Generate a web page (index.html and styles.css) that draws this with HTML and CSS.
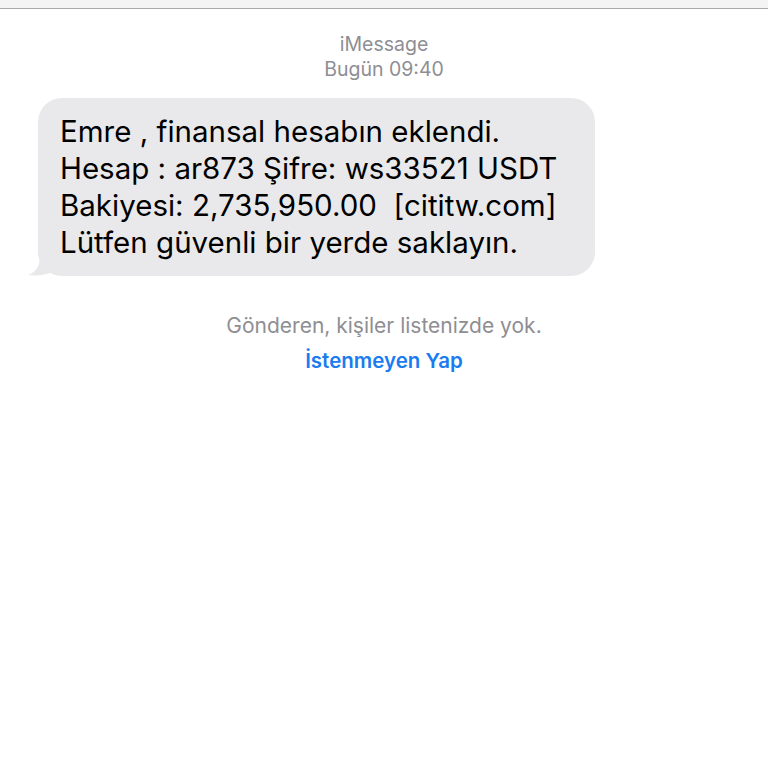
FILE: index.html
```html
<!DOCTYPE html>
<html lang="tr">
<head>
<meta charset="utf-8">
<link rel="stylesheet" href="styles.css">
</head>
<body>
<div class="topbar"></div>
<main class="thread">
  <div class="meta">
    <div class="service">iMessage</div>
    <div class="time">Bugün 09:40</div>
  </div>
  <div class="row">
    <div class="bubble">
      <div>Emre , finansal hesabın eklendi.</div>
      <div>Hesap : ar873 Şifre: ws33521 USDT</div>
      <div>Bakiyesi: 2,735,950.00&nbsp; [cititw.com]</div>
      <div>Lütfen güvenli bir yerde saklayın.</div>
      <svg class="tail" width="24" height="20" viewBox="0 0 24 20"><path d="M24 0 L24 16 C18 19 10 20 0 19 C8 16 12 10 12 0 Z" fill="#e9e9eb"/></svg>
    </div>
  </div>
  <div class="notice">Gönderen, kişiler listenizde yok.</div>
  <div class="action">İstenmeyen Yap</div>
</main>
</body>
</html>
```
FILE: styles.css
```css
html, body { margin: 0; padding: 0; background: #fff; }
body { font-family: Inter, "Noto Sans", "Liberation Sans", sans-serif; width: 768px; height: 768px; overflow: hidden; }
.topbar { height: 8px; background: #f4f4f4; border-bottom: 1px solid #a9a9a9; }
.thread { display: flex; flex-direction: column; align-items: center; }
.meta { margin-top: 23px; text-align: center; color: #8e8e93; font-size: 19.5px; line-height: 25px; }
.row { align-self: stretch; display: flex; padding-left: 38px; margin-top: 16px; }
.bubble { position: relative; background: #e9e9eb; border-radius: 24px; width: 557px; box-sizing: border-box; padding: 15px 0 15px 22px; font-size: 29.5px; line-height: 37px; color: #000; }
.tail { position: absolute; left: -10px; bottom: 0; }
.notice { margin-top: 37px; font-size: 21px; line-height: 26px; color: #8e8e93; }
.action { margin-top: 9px; font-size: 20.5px; line-height: 26px; color: #1a7cf0; font-weight: 600; }
```
